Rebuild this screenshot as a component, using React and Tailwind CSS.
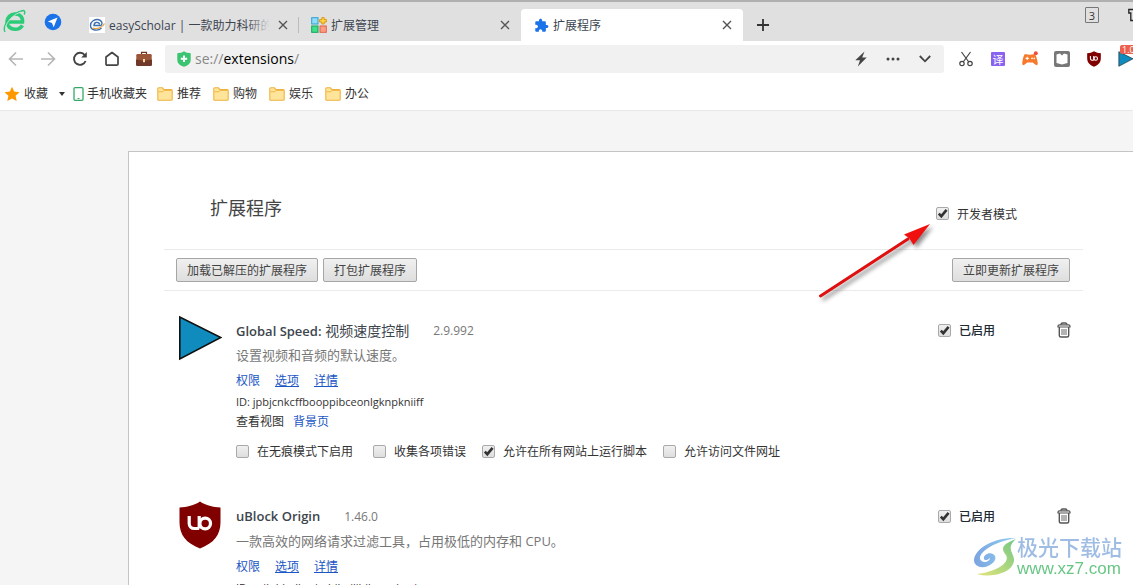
import React from "react";

const FONT = "font-['Open_Sans','Noto_Sans_CJK_SC',sans-serif]";

function Check({ id, label, checked, bold }) {
  return (
    <label htmlFor={id} className={`flex items-center gap-2 text-xs whitespace-nowrap ${bold ? "font-medium text-[#202a33]" : ""}`}>
      <span className="relative flex size-[13px]">
        <input
          id={id}
          type="checkbox"
          defaultChecked={checked}
          className="peer size-[13px] appearance-none rounded-[2px] border border-[#a9a9a9] bg-linear-to-b from-[#f0f0f0] to-[#dedede]"
        />
        <svg viewBox="0 0 13 13" className="pointer-events-none absolute inset-0 hidden size-[13px] peer-checked:block">
          <path d="M2.800 6.600 L5.300 9.200 L10.600 2.800" fill="none" stroke="#333" strokeWidth="2.600" />
        </svg>
      </span>
      <span className="pt-0.5">{label}</span>
    </label>
  );
}

function GrayButton({ children }) {
  return (
    <button className="h-6 whitespace-nowrap rounded-[2px] border border-[#a6a6a6] bg-linear-to-b from-[#f0f0f0] to-[#dedede] px-2.5 pt-0.5 text-xs text-[#444]">
      {children}
    </button>
  );
}

function CloseIcon() {
  return (
    <svg viewBox="0 0 10 10" className="size-[10px]">
      <path d="M1 1 L9 9 M9 1 L1 9" stroke="#555" strokeWidth="1.400" />
    </svg>
  );
}

function Tab({ icon, title, active, fade }) {
  return (
    <div className={`flex w-[222px] items-center pr-[11px] pl-3 ${active ? "rounded-t-[4px] bg-white" : ""}`}>
      <span className="flex size-4 shrink-0 items-center justify-center">{icon}</span>
      <span className="relative ml-1 flex-1 overflow-hidden pt-0.5 text-xs whitespace-nowrap text-[#3c4450]">
        {title}
        {fade && <span className="absolute inset-y-0 right-0 w-6 bg-linear-to-r from-transparent to-[#e0e0e0]" />}
      </span>
      <button aria-label="关闭标签页" className="ml-2">
        <CloseIcon />
      </button>
    </div>
  );
}

function ToolButton({ label, children }) {
  return (
    <button aria-label={label} className="flex h-7 w-8 shrink-0 items-center justify-center">
      {children}
    </button>
  );
}

function Folder() {
  return (
    <svg viewBox="0 0 16 14" className="h-[14px] w-4">
      <path d="M.8 12.500 V1.800 Q.8 .8 1.800 .8 H5.400 L6.800 2.600 H14.200 Q15.200 2.600 15.200 3.600 V12.400 Q15.200 13.200 14.200 13.200 H1.600 Q.8 13.200 .8 12.500Z" fill="#ffe59b" stroke="#efb23e" strokeWidth="1.100" />
      <path d="M1.400 4.800 H6 L7.400 3.400 H14.600" fill="none" stroke="#efb23e" strokeWidth=".9" />
    </svg>
  );
}

function UblockShield({ className }) {
  return (
    <svg viewBox="0 0 42 48" className={className}>
      <path d="M21 0.500 C15 4.500 8 6 0.500 6.500 V21 C.5 34 7 42 21 47.500 C35 42 41.500 34 41.500 21 V6.500 C34 6 27 4.500 21 .5Z" fill="#800000" />
      <path d="M10.200 15 V22.500 a5 5 0 0 0 5 5 H20.200 M20.200 15 V27.500" fill="none" stroke="#fff" strokeWidth="3.200" />
      <circle cx="26.200" cy="22.500" r="5.300" fill="none" stroke="#fff" strokeWidth="3.200" />
    </svg>
  );
}

function PlayIcon({ className }) {
  return (
    <svg viewBox="0 0 43 46" className={className}>
      <path d="M.8 2 V44 L41.800 22.500Z" fill="#0f8bbd" stroke="#111" strokeWidth="1.600" />
    </svg>
  );
}

function Trash() {
  return (
    <svg viewBox="0 0 14 16" className="h-4 w-[14px]">
      <path d="M1 5 V4 Q1 2.800 2.500 2.800 H11.500 Q13 2.800 13 4 V5Z" fill="#fff" stroke="#555" strokeWidth="1.200" />
      <path d="M4 2.800 Q4 1 5.500 1 H8.500 Q10 1 10 2.800" fill="none" stroke="#555" strokeWidth="1.400" />
      <path d="M2.300 5 V13.500 Q2.300 15 4 15 H10 Q11.700 15 11.700 13.500 V5" fill="none" stroke="#555" strokeWidth="1.400" />
      <path d="M5 7 V13 M7 7 V13 M9 7 V13" stroke="#555" strokeWidth=".9" />
    </svg>
  );
}

const extensions = [
  {
    key: "speed",
    name: "Global Speed:",
    localName: "视频速度控制",
    version: "2.9.992",
    desc: "设置视频和音频的默认速度。",
    id: "jpbjcnkcffbooppibceonlgknpkniiff",
    icon: <PlayIcon className="-mt-1 h-[46px] w-[43px]" />,
    scripts: true,
  },
  {
    key: "ublock",
    name: "uBlock Origin",
    version: "1.46.0",
    desc: "一款高效的网络请求过滤工具，占用极低的内存和 CPU。",
    id: "ccjlpblmlhmimbjbgiljbjkeamhcgi",
    icon: <UblockShield className="-mt-1 h-12 w-[42px]" />,
    scripts: true,
  },
];

function Extension({ ext }) {
  return (
    <li className="flex items-start pl-[15px]">
      <div className="w-[57px] shrink-0">{ext.icon}</div>
      <div className="flex-1">
        <div className="flex h-6 items-center">
          <h2 className="text-[13px] font-semibold text-[#3d454d]">
            {ext.name}
            {ext.localName && <span className="text-sm font-normal"> {ext.localName}</span>}
          </h2>
          <span className="ml-6 text-xs text-[#777]">{ext.version}</span>
        </div>
        <p className="flex h-[26px] items-center text-[13px] text-[#777]">{ext.desc}</p>
        <div className="flex h-6 items-center gap-[15px] text-xs text-[#1a56c4]">
          <a href="#permissions">权限</a>
          <a href="#options" className="underline">选项</a>
          <a href="#details" className="underline">详情</a>
        </div>
        <div className="flex h-[18px] items-center text-[11px]">ID: {ext.id}</div>
        <div className="flex h-[22px] items-center gap-[9px] text-xs">
          查看视图
          <a href="#background" className="text-[#1a56c4]">背景页</a>
        </div>
        <div className="flex h-9 items-center">
          <div className="flex gap-5">
            <Check id={`${ext.key}-incognito`} label="在无痕模式下启用" />
            <Check id={`${ext.key}-errors`} label="收集各项错误" />
          </div>
          <div className="ml-4 flex gap-4">
            <Check id={`${ext.key}-all`} label="允许在所有网站上运行脚本" checked={ext.scripts} />
            <Check id={`${ext.key}-files`} label="允许访问文件网址" />
          </div>
        </div>
      </div>
      <div className="flex h-[22px] w-[145px] shrink-0 items-center justify-between pr-3">
        <Check id={`${ext.key}-enabled`} label="已启用" checked bold />
        <button aria-label="删除">
          <Trash />
        </button>
      </div>
    </li>
  );
}

function TabBar() {
  return (
    <header className="flex h-[41px] border-t-2 border-[#b0b0b0] bg-[#e0e0e0]">
      <div className="flex w-[77px] shrink-0 items-center pl-[3px]">
        <svg viewBox="0 0 24 26" className="h-[26px] w-6">
          <path d="M5 13 H19.500 C20 7.500 16.500 5 12 5 C7.500 5 4 8.500 4 12.800 C4 17 7.500 20.300 12 20.300 C15.500 20.300 18 18.800 19.400 16.300" fill="none" stroke="#2bcb78" strokeWidth="3.600" />
          <path d="M2 23 C-1 17 7 5 20 1.500 C22.500 1.500 22 4 21 5.500" fill="none" stroke="#2bcb78" strokeWidth="1.400" />
          <path d="M2.500 17.500 C6 9.500 12 5 18 3" fill="none" stroke="#e0e0e0" strokeWidth=".9" />
        </svg>
        <svg viewBox="0 0 18 18" className="ml-[17px] size-[18px]">
          <circle cx="9" cy="9" r="8.300" fill="#1a73e8" />
          <path d="M13.500 4.500 L3.800 8.600 L8 10 L9.700 14.200Z" fill="#fff" />
        </svg>
      </div>
      <nav className="flex pt-[7px]">
        <Tab
          fade
          title="easyScholar | 一款助力科研的浏览器"
          icon={
            <svg viewBox="0 0 16 16" className="size-4">
              <rect width="16" height="16" fill="#fff" />
              <path d="M12.500 11 C9 14.500 1.500 13.500 1.500 8.500 C1.500 4 6 2.300 9 2.500 C13 3 14 7 12 8.500 H5 C5 4.500 10.500 4.500 10.500 7.500" fill="none" stroke="#3a6fb0" strokeWidth="1.400" />
              <path d="M3.500 11 C8 12.500 14 10.500 15.500 6.500" fill="none" stroke="#e8a33a" strokeWidth="1.200" />
            </svg>
          }
        />
        <div className="my-2 -ml-px w-px bg-[#bbb]" />
        <Tab
          title="扩展管理"
          icon={
            <svg viewBox="0 0 16 16" className="size-4">
              <rect x=".7" y=".7" width="6.300" height="6.300" fill="#8fdcf8" stroke="#2f9fd0" />
              <rect x=".7" y="9" width="6.300" height="6.300" fill="#3fe08b" stroke="#12a35a" />
              <rect x="9" y="9" width="6.300" height="6.300" fill="#ff9d84" stroke="#e2604a" />
              <path d="M10.800 .6 H13.200 V2.600 H15.400 V5 H13.200 V7 H10.800 V5 H8.600 V2.600 H10.800Z" fill="#ffd640" stroke="#d98f10" strokeWidth=".9" />
            </svg>
          }
        />
        <Tab
          active
          title="扩展程序"
          icon={
            <svg viewBox="0 0 24 24" className="size-[15px]">
              <path d="M20.500 11H19V7c0-1.100-.9-2-2-2h-4V3.500C13 2.120 11.880 1 10.500 1S8 2.120 8 3.500V5H4c-1.100 0-1.990.9-1.990 2v3.800H3.500c1.490 0 2.700 1.210 2.700 2.700s-1.210 2.700-2.700 2.700H2V20c0 1.100.9 2 2 2h3.800v-1.500c0-1.490 1.210-2.700 2.700-2.700 1.490 0 2.700 1.210 2.700 2.700V22H17c1.100 0 2-.9 2-2v-4h1.500c1.380 0 2.500-1.120 2.500-2.500S21.880 11 20.500 11z" fill="#1a73e8" />
            </svg>
          }
        />
      </nav>
      <button aria-label="新建标签页" className="flex w-10 items-center justify-center pt-1.5">
        <svg viewBox="0 0 12 12" className="size-3">
          <path d="M6 0 V12 M0 6 H12" stroke="#333" strokeWidth="1.800" />
        </svg>
      </button>
      <div className="flex flex-1 items-start justify-end gap-[29px] overflow-hidden pt-[5px]">
        <span className="flex h-4 w-[14px] items-center justify-center rounded-[1px] border border-[#777] text-[11px] leading-none text-[#333]">3</span>
        <svg viewBox="0 0 5 14" className="mt-px h-[14px] w-[5px]">
          <path d="M6 1.500 H.8 V5 H2.800 V12.500 H6" fill="none" stroke="#222" strokeWidth="1.300" />
        </svg>
      </div>
    </header>
  );
}

function Toolbar() {
  return (
    <div className="flex h-9 items-center bg-white">
      <ToolButton label="后退">
        <svg viewBox="0 0 16 16" className="size-4">
          <path d="M15 8 H2 M8 1.500 L1.500 8 L8 14.500" fill="none" stroke="#b5b5b5" strokeWidth="1.600" />
        </svg>
      </ToolButton>
      <ToolButton label="前进">
        <svg viewBox="0 0 16 16" className="size-4">
          <path d="M1 8 H14 M8 1.500 L14.500 8 L8 14.500" fill="none" stroke="#b5b5b5" strokeWidth="1.600" />
        </svg>
      </ToolButton>
      <ToolButton label="刷新">
        <svg viewBox="0 0 16 16" className="size-4">
          <path d="M12.800 4.200 A6 6 0 1 0 13.600 10" fill="none" stroke="#444" strokeWidth="1.900" />
          <path d="M14.800 1 V6.500 H9.200Z" fill="#444" />
        </svg>
      </ToolButton>
      <ToolButton label="主页">
        <svg viewBox="0 0 16 16" className="size-4">
          <path d="M2 6 L8 1.500 L14 6 V13 Q14 14.200 12.800 14.200 H3.200 Q2 14.200 2 13Z" fill="none" stroke="#444" strokeWidth="1.700" strokeLinejoin="round" />
        </svg>
      </ToolButton>
      <ToolButton label="工具箱">
        <svg viewBox="0 0 16 16" className="size-4">
          <path d="M5.500 3 V1.300 H10.500 V3" fill="none" stroke="#6b3421" strokeWidth="1.200" />
          <rect x=".3" y="3" width="15.400" height="11.800" rx="1.300" fill="#9b5537" />
          <path d="M0 8.500 Q8 10.500 16 8.500 V13.500 Q16 15 14.500 15 H1.500 Q0 15 0 13.500Z" fill="#70382a" />
          <rect x="7" y="8" width="2" height="3.200" fill="#f3d9a0" />
        </svg>
      </ToolButton>
      <div className="ml-[5px] flex h-7 flex-1 items-center rounded-[3px] bg-[#f1f1f1] pr-[3px] pl-3">
        <svg viewBox="0 0 14 16" className="h-4 w-[14px] shrink-0">
          <path d="M7 .3 C9 1.800 11.500 2.200 13.700 2.200 V8.500 C13.700 12.500 11 14.500 7 15.800 C3 14.500 .3 12.500 .3 8.500 V2.200 C2.500 2.200 5 1.800 7 .3Z" fill="#3ac46f" />
          <path d="M7 4.500 V11 M3.800 7.800 H10.200" stroke="#fff" strokeWidth="2" />
        </svg>
        <span className="relative ml-1 flex h-7 flex-1 items-center">
          <input aria-label="地址" defaultValue="se://extensions/" className="w-full bg-transparent text-sm text-transparent caret-black outline-none" />
          <span aria-hidden="true" className="pointer-events-none absolute inset-y-0 left-0 flex items-center text-sm text-[#888]">
            se://<span className="text-black">extensions</span>/
          </span>
        </span>
        <ToolButton label="加速">
          <svg viewBox="0 0 12 16" className="h-4 w-3">
            <path d="M9.500 .5 L.3 9.300 H5 L2.800 15.500 L11.700 6.500 H7.200Z" fill="#444" />
          </svg>
        </ToolButton>
        <ToolButton label="更多">
          <svg viewBox="0 0 14 4" className="h-1 w-[14px]">
            <circle cx="2" cy="2" r="1.500" fill="#444" />
            <circle cx="7" cy="2" r="1.500" fill="#444" />
            <circle cx="12" cy="2" r="1.500" fill="#444" />
          </svg>
        </ToolButton>
        <ToolButton label="展开">
          <svg viewBox="0 0 12 8" className="h-2 w-3">
            <path d="M.8 1 L6 6.300 L11.200 1" fill="none" stroke="#444" strokeWidth="1.800" />
          </svg>
        </ToolButton>
      </div>
      <div className="flex w-[189px] overflow-hidden pl-1.5">
        <ToolButton label="截图">
          <svg viewBox="0 0 14 16" className="h-4 w-[14px]">
            <path d="M2.500 1 L9.800 11 M11.500 1 L4.200 11" stroke="#444" strokeWidth="1.200" />
            <circle cx="3" cy="12.500" r="2.200" fill="none" stroke="#444" strokeWidth="1.200" />
            <circle cx="11" cy="12.500" r="2.200" fill="none" stroke="#444" strokeWidth="1.200" />
          </svg>
        </ToolButton>
        <ToolButton label="翻译">
          <span className="flex size-[14px] items-center justify-center rounded-[1px] bg-[#8a62f0] text-[11px] leading-none text-white">译</span>
        </ToolButton>
        <ToolButton label="游戏">
          <svg viewBox="0 0 16 16" className="size-4">
            <path d="M3 3 Q8 4.500 12.500 3 Q14.500 4 15.800 12.500 Q15.500 15.500 12.500 13 L10.800 11.500 H5.200 L3.500 13 Q.5 15.500 .2 12.500 Q1 4.500 3 3Z" fill="#f6792c" />
            <path d="M5.200 5.800 V9 M3.600 7.400 H6.800" stroke="#fff" strokeWidth="1.100" />
            <circle cx="10" cy="7.400" r=".8" fill="#fff" />
            <circle cx="12.300" cy="7.400" r=".8" fill="#fff" />
            <circle cx="13.800" cy="2.300" r="2" fill="#f04b3c" />
          </svg>
        </ToolButton>
        <ToolButton label="阅读">
          <svg viewBox="0 0 16 16" className="size-4">
            <rect width="16" height="16" rx="2" fill="#777" />
            <path d="M2.500 3.500 L6 2.600 L8 4.500 L10 2.600 L13.500 3.500 V12 L8 13.500 L2.500 12Z" fill="#fff" />
          </svg>
        </ToolButton>
        <ToolButton label="uBlock">
          <UblockShield className="h-4 w-[14px]" />
        </ToolButton>
        <ToolButton label="Global Speed">
          <span className="relative flex">
            <PlayIcon className="size-4" />
            <span className="absolute -top-1.5 left-0.5 rounded-[2px] bg-[#ee5f4d] px-0.5 text-[9px] leading-[9px] text-white">1.00</span>
          </span>
        </ToolButton>
      </div>
    </div>
  );
}

function Bookmarks() {
  return (
    <nav className="flex h-[34px] items-center border-b border-[#e8e8e8] bg-white pl-1 text-xs text-[#333]">
      <svg viewBox="0 0 16 16" className="size-4">
        <path d="M8 .8 L10.200 5.600 L15.500 6.200 L11.600 9.800 L12.700 15 L8 12.400 L3.300 15 L4.400 9.800 L.5 6.200 L5.800 5.600Z" fill="#ff9800" />
      </svg>
      <a href="#favorites" className="ml-1">收藏</a>
      <svg viewBox="0 0 6 4" className="ml-[11px] h-1 w-1.5">
        <path d="M0 0 H6 L3 4Z" fill="#333" />
      </svg>
      <a href="#mobile" className="ml-2 flex items-center gap-[3px]">
        <svg viewBox="0 0 11 14" className="h-[14px] w-[11px]">
          <rect x="1" y=".7" width="9" height="12.600" rx="1" fill="#fff" stroke="#36a866" strokeWidth="1.300" />
          <path d="M4.500 11.500 H6.500" stroke="#36a866" />
        </svg>
        手机收藏夹
      </a>
      <div className="ml-2.5 flex gap-3">
        {["推荐", "购物", "娱乐", "办公"].map((t) => (
          <a key={t} href="#folder" className="flex items-center gap-1">
            <Folder />
            {t}
          </a>
        ))}
      </div>
    </nav>
  );
}

function Watermark() {
  return (
    <div className="pointer-events-none absolute right-[11px] bottom-1.5 flex items-center opacity-75">
      <svg viewBox="0 0 44 40" className="h-10 w-11">
        <defs>
          <linearGradient id="swoosh" x1="0" y1="0" x2="1" y2="0">
            <stop offset="0" stopColor="#4f86d6" />
            <stop offset="1" stopColor="#6ec3ee" />
          </linearGradient>
          <linearGradient id="leaf" x1="0" y1="1" x2="1" y2="0">
            <stop offset="0" stopColor="#d9dc50" />
            <stop offset="1" stopColor="#45b55c" />
          </linearGradient>
        </defs>
        <path d="M43 1 C22 0 2 11 1 23 C1 29 8 32 15 29 C22 26 25 20 20 17 C16 15 10 18 11 22 C12 24 15 23 17 21 C17 25 9 27 7 22 C6 14 22 5 43 1Z" fill="url(#swoosh)" />
        <path d="M43 2 C30 7 27 11 33 18 C37 25 26 34 4 37 C22 42 42 34 41 22 C40 15 33 11 43 2Z" fill="url(#leaf)" />
      </svg>
      <div className="flex flex-col">
        <span className="text-[21px] leading-6 font-medium text-[#7fa8dc]">极光下载站</span>
        <span className="font-['Liberation_Sans',sans-serif] text-[17px] leading-5 text-[#35b35b]">www.xz7.com</span>
      </div>
    </div>
  );
}

export default function App() {
  return (
    <div className={`relative flex h-screen flex-col overflow-hidden bg-[#f5f5f5] text-[#333] ${FONT}`}>
      <TabBar />
      <Toolbar />
      <Bookmarks />
      <main className="relative mt-10 ml-32 flex-1 overflow-hidden border-t border-l border-[#c4c4c4] bg-white pr-[50px] pl-[35px]">
        <div className="flex h-[97px] items-center justify-between pr-[66px] pl-[46px]">
          <h1 className="pt-3.5 text-lg text-[#444]">扩展程序</h1>
          <div className="pt-[26px]">
            <Check id="dev-mode" label="开发者模式" checked />
          </div>
        </div>
        <div className="flex h-[42px] items-center gap-[5px] border-y border-[#ebebeb] pr-[13px] pl-3">
          <GrayButton>加载已解压的扩展程序</GrayButton>
          <GrayButton>打包扩展程序</GrayButton>
          <div className="ml-auto flex">
            <GrayButton>立即更新扩展程序</GrayButton>
          </div>
        </div>
        <ul className="flex flex-col gap-9 pt-7">
          {extensions.map((ext) => (
            <Extension key={ext.key} ext={ext} />
          ))}
        </ul>
      </main>
      <svg viewBox="0 0 120 84" className="pointer-events-none absolute top-[218px] right-[197px] h-[84px] w-[120px] drop-shadow-[3px_3px_2px_rgba(0,0,0,0.45)]">
        <path d="M4.500 78 L92 21" stroke="#e01010" strokeWidth="3" strokeLinecap="round" />
        <path d="M114 6 L97.500 27 L93.500 20.500 L88 16.500Z" fill="#f01010" />
      </svg>
      <Watermark />
    </div>
  );
}
